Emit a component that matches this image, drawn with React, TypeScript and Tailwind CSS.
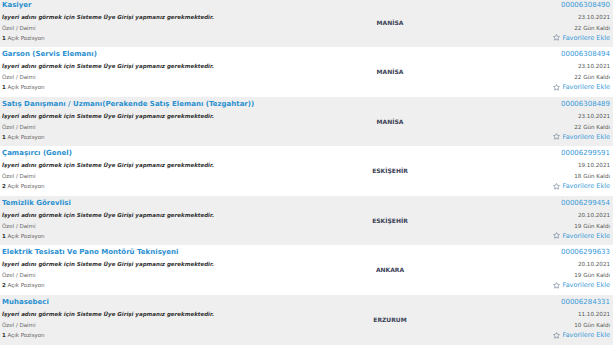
import { Star } from "lucide-react";

interface Job {
  title: string;
  city: string;
  code: string;
  date: string;
  daysLeft: string;
  openings: number;
}

const jobs: Job[] = [
  { title: "Kasiyer", city: "MANİSA", code: "00006308490", date: "23.10.2021", daysLeft: "22 Gün Kaldı", openings: 1 },
  { title: "Garson (Servis Elemanı)", city: "MANİSA", code: "00006308494", date: "23.10.2021", daysLeft: "22 Gün Kaldı", openings: 1 },
  {
    title: "Satış Danışmanı / Uzmanı(Perakende Satış Elemanı (Tezgahtar))",
    city: "MANİSA",
    code: "00006308489",
    date: "23.10.2021",
    daysLeft: "22 Gün Kaldı",
    openings: 1,
  },
  { title: "Çamaşırcı (Genel)", city: "ESKİŞEHİR", code: "00006299591", date: "19.10.2021", daysLeft: "18 Gün Kaldı", openings: 2 },
  { title: "Temizlik Görevlisi", city: "ESKİŞEHİR", code: "00006299454", date: "20.10.2021", daysLeft: "19 Gün Kaldı", openings: 1 },
  {
    title: "Elektrik Tesisatı Ve Pano Montörü Teknisyeni",
    city: "ANKARA",
    code: "00006299633",
    date: "20.10.2021",
    daysLeft: "19 Gün Kaldı",
    openings: 2,
  },
  { title: "Muhasebeci", city: "ERZURUM", code: "00006284331", date: "11.10.2021", daysLeft: "10 Gün Kaldı", openings: 1 },
];

function JobRow({ job, shaded }: { job: Job; shaded: boolean }) {
  return (
    <div
      className={`mr-[3px] grid h-[49.6px] grid-cols-[328px_120px_1fr] items-start pr-[3px] pl-[2px] pt-[1px] ${
        shaded ? "bg-[#efefef]" : "bg-white"
      }`}
    >
      <div className="min-w-0">
        <p className="whitespace-nowrap text-[7px] font-bold leading-[12px] text-[#2b8fd0]">{job.title}</p>
        <p className="whitespace-nowrap text-[5.5px] font-bold italic leading-[12px] text-[#333]">
          İşyeri adını görmek için Sisteme Üye Girişi yapmanız gerekmektedir.
        </p>
        <p className="text-[5.5px] leading-[10px] text-[#666]">Özel / Daimi</p>
        <p className="text-[5.5px] leading-[10px] text-[#666]">
          <span className="font-bold text-[#333]">{job.openings}</span> Açık Pozisyon
        </p>
      </div>
      <div className="flex h-[47px] items-center justify-center">
        <span className="text-[6px] font-bold text-[#3b4256]">{job.city}</span>
      </div>
      <div className="flex flex-col items-end">
        <p className="text-[7px] leading-[12px] text-[#3a9ad8]">{job.code}</p>
        <p className="text-[5.6px] leading-[12px] text-[#555]">{job.date}</p>
        <p className="text-[5.6px] leading-[10px] text-[#555]">{job.daysLeft}</p>
        <p className="flex items-center gap-[2px] text-[6.5px] leading-[10px] text-[#3a9ad8]">
          <Star className="h-[7px] w-[7px] text-[#5a6f8a]" strokeWidth={2} />
          Favorilere Ekle
        </p>
      </div>
    </div>
  );
}

export default function App() {
  return (
    <div className="h-[347px] w-[616px] overflow-hidden bg-white font-['DejaVu_Sans',Verdana,sans-serif]">
      <div className="-mt-[2.5px]">
        {jobs.map((job, i) => (
          <JobRow key={job.code} job={job} shaded={i % 2 === 0} />
        ))}
      </div>
    </div>
  );
}
